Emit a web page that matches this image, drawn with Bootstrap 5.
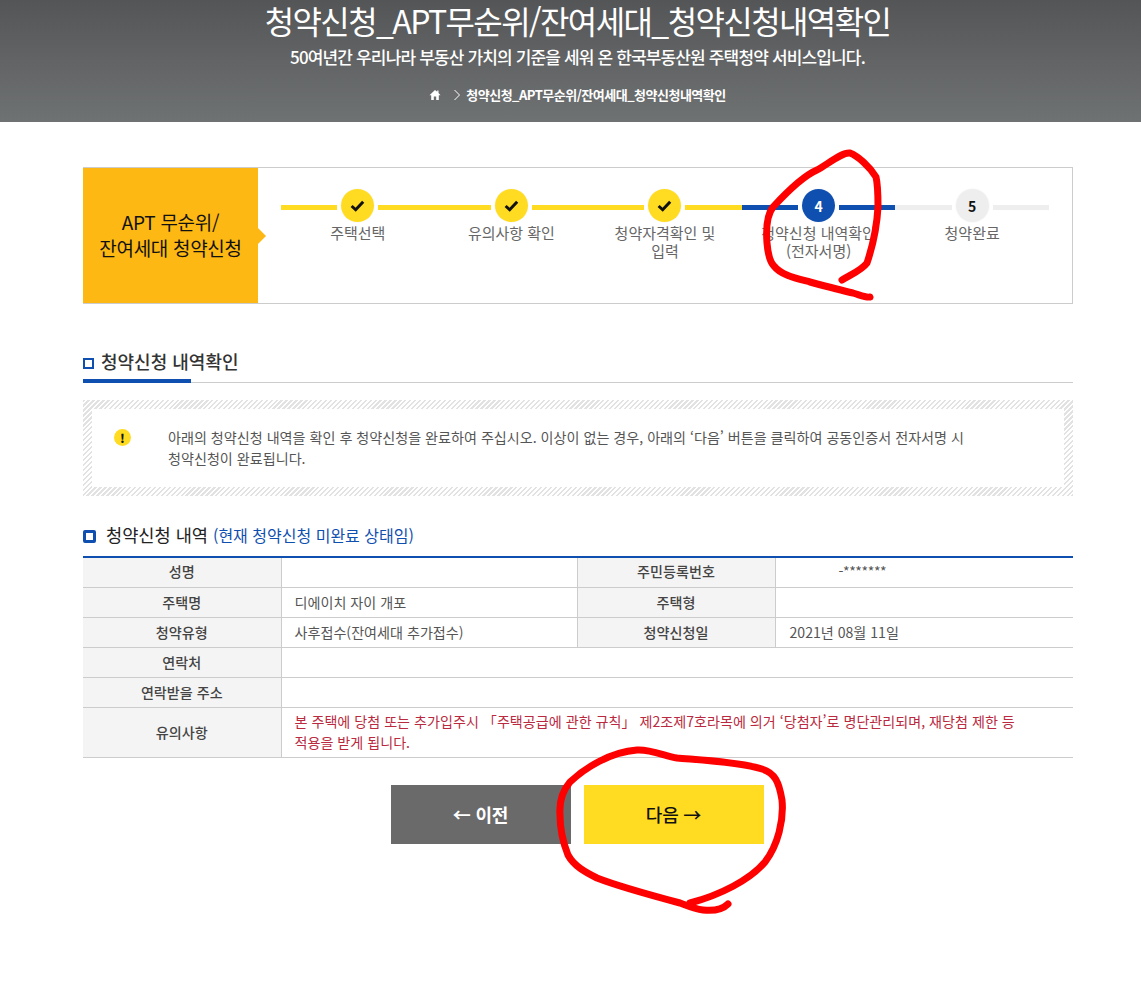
<!DOCTYPE html>
<html lang="ko">
<head>
<meta charset="utf-8">
<title>청약신청내역확인</title>
<link href="https://cdn.jsdelivr.net/npm/bootstrap@5.3.0/dist/css/bootstrap.min.css" rel="stylesheet">
<style>
html,body{height:1000px;overflow:hidden}
body{font-family:"Noto Sans CJK KR","Noto Sans",sans-serif;background:#fff;color:#555;font-size:14px;position:relative;word-break:keep-all}
.hero{height:122px;background:linear-gradient(#545557,#6f7272);color:#fff;text-align:center;padding-left:14px}
.hero-title{font-size:32px;font-weight:400;line-height:40px;margin:0;letter-spacing:-1.6px}
.hero-sub{font-size:17px;font-weight:500;line-height:24px;margin:5px 0 0;letter-spacing:-.85px}
.crumb{margin-top:17px;font-size:13px;font-weight:700;line-height:18px;letter-spacing:-.5px}
.crumb-chev{margin:0 5px 0 12px}
.wrap{width:990px;margin:45px 0 0 83px}
.stepbox{height:137px;border:1px solid #ccc;border-left:0}
.stepside{width:175px;background:#fdb813;color:#111;font-size:19px;line-height:26px;position:relative;letter-spacing:-.3px;padding-bottom:1px}
.stepside::after{content:"";position:absolute;left:100%;top:50%;margin-top:-8px;border-style:solid;border-width:8px 0 8px 8px;border-color:transparent transparent transparent #fdb813}
.steps{padding:21px 23px 0}
.onestep{flex:1 1 0;min-width:0;text-align:center;color:#666;line-height:18px;font-size:15px}
.seg{flex:1;height:5px;margin-top:4px}
.dot{width:33px;height:33px;border-radius:50%;margin:0 4px;font-size:14px;font-weight:700;color:#111;box-shadow:0 0 0 1px rgba(0,0,0,.02)}
.onelabel{padding:0 12px;margin-top:2px}
.c-y .seg,.c-y .dot{background:#ffdc22}
.c-b .seg,.c-b .dot{background:#0f4fb0}
.c-b .dot{color:#fff}
.c-g .seg,.c-g .dot{background:#eee}
.sec1{margin-top:46px;height:33px;border-bottom:1px solid #ccc;position:relative}
.sec1::after{content:"";position:absolute;left:0;bottom:-1px;width:108px;height:4px;background:#0f4fb0}
.sec1 h2{font-size:18px;font-weight:500;color:#333;line-height:22px;margin:0}
.sq1{width:11px;height:11px;border:2px solid #0f4fb0;margin:8px 7px 0 0}
.notice{margin-top:17px;height:96px;padding:9px;background:repeating-linear-gradient(135deg,#e2e2e2 0 1.6px,#fff 1.6px 3.5px)}
.notice-in{background:#fff;height:78px;padding:18px 0 0 22px}
.warn{width:17px;height:17px;border-radius:50%;background:#ffdc22;color:#111;font-weight:900;font-size:12px;line-height:17px;text-align:center;margin-top:2px;margin-right:37px;flex:none}
.notice-text{line-height:21px;width:810px;color:#555;font-size:14.1px}
.sec2{margin-top:27px;height:26px}
.sec2 h3{font-size:17.6px;font-weight:400;color:#222;line-height:24px;margin:0 0 2px}
.sec2 span.note{font-size:16px;color:#0f4fb0}
.sq2{width:13px;height:13px;border:3px solid #0f4fb0;border-radius:2px;margin-right:10px}
.datatbl{table-layout:fixed;margin:7px 0 0;border-top:2px solid #0f4fb0;color:#555;width:990px}
.datatbl th,.datatbl td{border:0;border-bottom:1px solid #ccc;padding:4px 14px;line-height:21px;height:30px;vertical-align:middle;font-size:14.1px;color:#555;box-shadow:none}
.datatbl tr:first-child th,.datatbl tr:first-child td{padding-top:3px;padding-bottom:5px}
.datatbl th{background:#f4f4f4;font-weight:500;text-align:center;border-right:1px solid #ccc;color:#444}
.datatbl td{border-right:1px solid #ccc;padding-left:13px}
.datatbl td:last-child{border-right:0}
.datatbl td.lastcol{padding-left:14px}
.datatbl td.alertcell{color:#b92a40;padding:3px 14px 4px 13px}
.datatbl td.idcell{padding-left:63px;letter-spacing:-.4px}
.col-a{width:198px}.col-b{width:296px}
.btnrow{margin-top:27px;gap:13px;padding-right:2px}
.bigbtn{width:180px;height:59px;border-radius:0;border:0;font-size:18px;font-weight:700;padding:0;letter-spacing:-.2px}
.btn-prev{background:#6a6a6a;color:#fff}
.btn-next{background:#ffdc22;color:#111;font-weight:500}
.scribble{position:absolute;left:0;top:0;pointer-events:none}
</style>
</head>
<body>
<header class="hero">
  <h1 class="hero-title">청약신청_APT무순위/잔여세대_청약신청내역확인</h1>
  <p class="hero-sub">50여년간 우리나라 부동산 가치의 기준을 세워 온 한국부동산원 주택청약 서비스입니다.</p>
  <div class="crumb d-flex justify-content-center align-items-center">
    <svg width="12" height="12" viewBox="0 0 12 12" fill="#fff"><path d="M6 1 .5 6.2h1.7V11h2.6V7.6h2.4V11h2.6V6.2h1.7L9.5 3.9V1.6H8.2v1.1z"/></svg>
    <svg class="crumb-chev" width="8" height="12" viewBox="0 0 8 12" fill="none" stroke="#fff"><path d="m1.5 1 5 5-5 5"/></svg>
    <span>청약신청_APT무순위/잔여세대_청약신청내역확인</span>
  </div>
</header>
<main class="wrap">
  <section class="stepbox d-flex">
    <div class="stepside d-flex align-items-center justify-content-center text-center">APT 무순위/<br>잔여세대 청약신청</div>
    <div class="steps d-flex flex-grow-1">
      <div class="onestep c-y">
        <div class="d-flex align-items-center"><i class="seg"></i><span class="dot d-flex align-items-center justify-content-center"><svg width="15" height="12" viewBox="0 0 14 11" fill="none" stroke="#111" stroke-width="2.8"><path d="m1.5 5.5 3.8 3.5 7-7.5"/></svg></span><i class="seg"></i></div>
        <div class="onelabel">주택선택</div>
      </div>
      <div class="onestep c-y">
        <div class="d-flex align-items-center"><i class="seg"></i><span class="dot d-flex align-items-center justify-content-center"><svg width="15" height="12" viewBox="0 0 14 11" fill="none" stroke="#111" stroke-width="2.8"><path d="m1.5 5.5 3.8 3.5 7-7.5"/></svg></span><i class="seg"></i></div>
        <div class="onelabel">유의사항 확인</div>
      </div>
      <div class="onestep c-y">
        <div class="d-flex align-items-center"><i class="seg"></i><span class="dot d-flex align-items-center justify-content-center"><svg width="15" height="12" viewBox="0 0 14 11" fill="none" stroke="#111" stroke-width="2.8"><path d="m1.5 5.5 3.8 3.5 7-7.5"/></svg></span><i class="seg"></i></div>
        <div class="onelabel">청약자격확인 및 입력</div>
      </div>
      <div class="onestep c-b">
        <div class="d-flex align-items-center"><i class="seg"></i><span class="dot d-flex align-items-center justify-content-center">4</span><i class="seg"></i></div>
        <div class="onelabel">청약신청 내역확인<br>(전자서명)</div>
      </div>
      <div class="onestep c-g">
        <div class="d-flex align-items-center"><i class="seg"></i><span class="dot d-flex align-items-center justify-content-center">5</span><i class="seg"></i></div>
        <div class="onelabel">청약완료</div>
      </div>
    </div>
  </section>

  <div class="sec1 d-flex align-items-start"><span class="sq1"></span><h2>청약신청 내역확인</h2></div>

  <div class="notice">
    <div class="notice-in d-flex">
      <span class="warn">!</span>
      <p class="notice-text m-0">아래의 청약신청 내역을 확인 후 청약신청을 완료하여 주십시오. 이상이 없는 경우, 아래의 ‘다음’ 버튼을 클릭하여 공동인증서 전자서명 시 청약신청이 완료됩니다.</p>
    </div>
  </div>

  <div class="sec2 d-flex align-items-center"><span class="sq2"></span><h3>청약신청 내역 <span class="note">(현재 청약신청 미완료 상태임)</span></h3></div>

  <table class="table datatbl">
    <colgroup><col class="col-a"><col class="col-b"><col class="col-a"><col></colgroup>
    <tbody>
      <tr><th>성명</th><td></td><th>주민등록번호</th><td class="idcell">-*******</td></tr>
      <tr><th>주택명</th><td>디에이치 자이 개포</td><th>주택형</th><td></td></tr>
      <tr><th>청약유형</th><td>사후접수(잔여세대 추가접수)</td><th>청약신청일</th><td class="lastcol">2021년 08월 11일</td></tr>
      <tr><th>연락처</th><td colspan="3"></td></tr>
      <tr><th>연락받을 주소</th><td colspan="3"></td></tr>
      <tr><th>유의사항</th><td colspan="3" class="alertcell">본 주택에 당첨 또는 추가입주시 「주택공급에 관한 규칙」 제2조제7호라목에 의거 ‘당첨자’로 명단관리되며, 재당첨 제한 등<br>적용을 받게 됩니다.</td></tr>
    </tbody>
  </table>

  <div class="btnrow d-flex justify-content-center">
    <button type="button" class="btn bigbtn btn-prev">← 이전</button>
    <button type="button" class="btn bigbtn btn-next">다음 →</button>
  </div>
</main>
<svg class="scribble" width="1141" height="1000" viewBox="0 0 1141 1000" fill="none" stroke="#f00" stroke-width="7" stroke-linecap="round" stroke-linejoin="round">
  <path d="M842 280C852 274 862 270 867 263C873 245 877 225 878 207C878 195 878 185 876 177C870 167 858 156 850 153C842 152 828 164 817 170C803 176 785 194 773 207C766 216 766 230 767 243C768 255 770 262 774 266C781 275 795 278 810 282C825 286 840 290 853 293C860 295 866 298 870 297"/>
  <path d="M728 904C722 910 712 911 703 910C695 909 688 906 680 903C650 895 620 887 597 878C585 872 574 866 568 855C562 840 560 830 560 815C559 800 563 790 570 782C585 768 610 752 637 750C650 749 665 756 677 758C700 760 740 762 762 769C775 773 779 782 782 800C784 820 778 845 765 862C750 880 720 895 690 903"/>
</svg>
<script src="https://cdn.jsdelivr.net/npm/bootstrap@5.3.0/dist/js/bootstrap.bundle.min.js"></script>
</body>
</html>
